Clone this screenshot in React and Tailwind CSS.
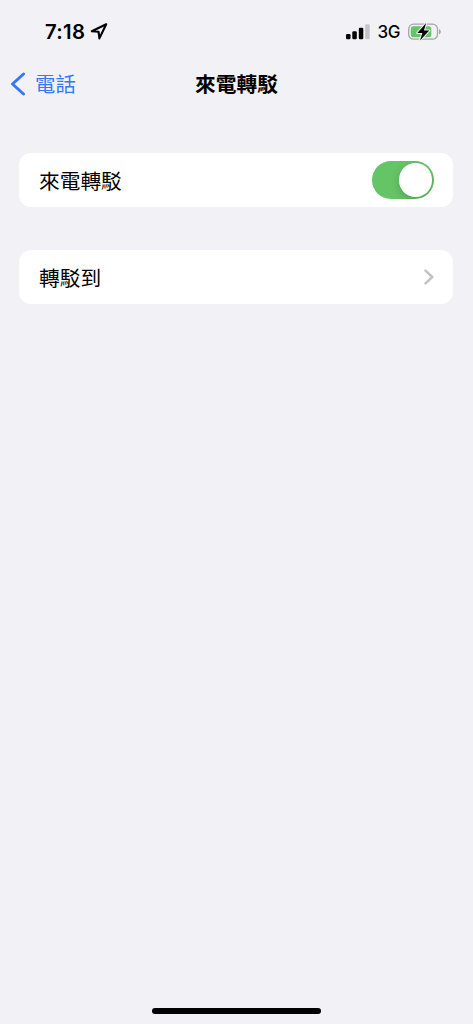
import { useState } from "react";

export default function App() {
  const [enabled, setEnabled] = useState(true);

  return (
    <div className="flex h-screen w-full flex-col overflow-hidden bg-[#f1f1f6] font-['Inter','Noto_Sans_CJK_TC',sans-serif] text-black">
      <StatusBar />

      {/* Navigation bar */}
      <header className="grid h-[42px] grid-cols-3 items-center">
        <button className="flex items-center gap-[9px] pl-[10px] text-[#3478f6]">
          <svg width="16" height="24" viewBox="0 0 16 24" fill="none">
            <path d="M13.5 2 2.5 12l11 10" stroke="currentColor" strokeWidth="3" strokeLinecap="round" strokeLinejoin="round" />
          </svg>
          <span className="pt-[2px] text-[20.4px] leading-[30px] whitespace-nowrap">電話</span>
        </button>
        <h1 className="pt-[2px] text-center text-[20.7px] leading-[30px] font-bold whitespace-nowrap">來電轉駁</h1>
      </header>

      {/* Settings groups */}
      <main className="flex flex-1 flex-col gap-[43px] pt-[48px] pr-[20px] pl-[19px]">
        <Row label="來電轉駁">
          <Toggle checked={enabled} onChange={() => setEnabled(!enabled)} />
        </Row>
        <Row label="轉駁到">
          <svg width="10" height="16" viewBox="0 0 10 16" fill="none">
            <path d="m1.5 1.7 6.8 6.3-6.8 6.3" stroke="#c3c3c6" strokeWidth="2.5" strokeLinecap="round" strokeLinejoin="round" />
          </svg>
        </Row>
      </main>

      {/* Home indicator */}
      <div className="mx-auto mb-[10px] h-[6px] w-[169px] rounded-full bg-black" />
    </div>
  );
}

function StatusBar() {
  return (
    <div className="flex h-[63px] items-center justify-between pr-[31px] pl-[45px]">
      <div className="flex items-center gap-[5px]">
        <span className="text-[20.3px] leading-6 font-semibold tracking-[0.3px]">7:18</span>
        <svg width="18" height="17" viewBox="0 0 18 17" fill="none">
          <path d="M16.2 1.3 1.8 8.3l6.8.5.8 6.6Z" stroke="black" strokeWidth="2.1" strokeLinejoin="round" />
        </svg>
      </div>
      <div className="flex items-center">
        <svg width="24" height="16" viewBox="0 0 24 16">
          <rect x="0" y="10" width="4.5" height="5.2" rx="1.2" />
          <rect x="6.3" y="7.2" width="4.5" height="8" rx="1.2" />
          <rect x="12.8" y="3.8" width="4.5" height="11.4" rx="1.2" />
          <rect x="19.2" y="0.3" width="4.5" height="14.9" rx="1.2" fill="#c5c5c9" />
        </svg>
        <span className="ml-[7px] text-[17px] leading-6 font-medium tracking-[-0.4px]">3G</span>
        <Battery />
      </div>
    </div>
  );
}

function Battery() {
  return (
    <svg width="34" height="20" viewBox="0 0 34 20" className="ml-[8px]">
      <rect x="0.7" y="2.2" width="28.8" height="15" rx="4.8" fill="none" stroke="#a5a5aa" strokeWidth="1.3" />
      <rect x="2.8" y="4.2" width="20.5" height="11" rx="2.8" fill="#65c466" />
      <path d="M31 7.2c2.4.6 2.4 4.4 0 5Z" fill="#a5a5aa" />
      <path d="M18.2 1 9.3 10.9h5L12 18.4l9.2-9.9h-5.3Z" fill="black" stroke="#f1f1f6" strokeWidth="2" strokeLinejoin="round" paintOrder="stroke" />
    </svg>
  );
}

// One rounded card with a label and a trailing control
function Row({ label, children }) {
  return (
    <div className="flex h-[54px] items-center justify-between rounded-[12px] bg-white pr-[19px] pl-[20px]">
      <span className="pt-[3px] text-[20.7px] leading-[30px]">{label}</span>
      {children}
    </div>
  );
}

function Toggle({ checked, onChange }) {
  return (
    <button
      role="switch"
      aria-checked={checked}
      onClick={onChange}
      className={`flex h-[38px] w-[62px] items-center overflow-hidden rounded-full p-[2px] ${checked ? "justify-end bg-[#65c466]" : "justify-start bg-[#e9e9eb]"}`}
    >
      <span className="size-[33.5px] rounded-full bg-white shadow-[0_3px_8px_rgba(0,0,0,0.18)]" />
    </button>
  );
}
